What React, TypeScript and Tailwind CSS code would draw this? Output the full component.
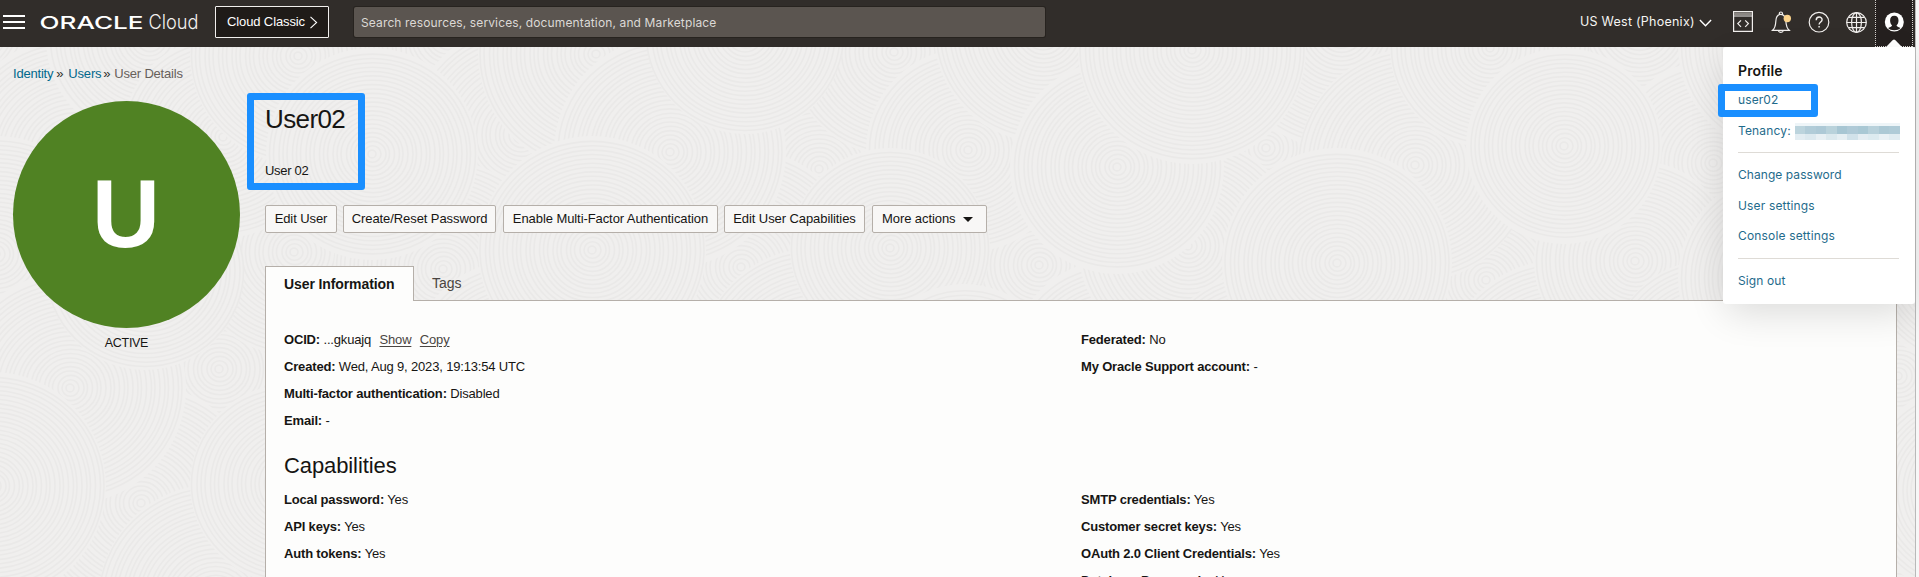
import React from "react";

const COLS = 14;
const ROWS = 6;

const SWIRLS = Array.from({ length: COLS * ROWS }, (_, n) => {
  const col = n % COLS;
  const row = Math.floor(n / COLS);
  return {
    x: col * 152 - 20 + (row % 2) * 76 + ((n * 37) % 40) - 20,
    y: row * 112 + 40 + ((n * 53) % 36) - 18,
    r: 98 + ((n * 29) % 24),
    order: (n * 31) % 83,
  };
}).sort((a, b) => a.order - b.order);

const RINGS = Array.from({ length: 27 }, (_, i) => 4 + i * 4.5);

function Backdrop() {
  return (
    <svg className="absolute inset-0 h-full w-full" aria-hidden="true">
      {SWIRLS.map(({ x, y, r }, n) => (
        <g key={n}>
          <circle cx={x} cy={y} r={r} fill="#f0efee" />
          {RINGS.filter((q) => q < r).map((q, i) => (
            <ellipse key={i} cx={x + (i % 3) * 0.5} cy={y} rx={q} ry={q * 0.97} fill="none" stroke="#eae9e8" strokeWidth="1.6" />
          ))}
        </g>
      ))}
    </svg>
  );
}

function Row({ label, children }: { label: string; children: React.ReactNode }) {
  return (
    <div className="h-[27px] leading-[27px] tracking-[-0.17px] whitespace-nowrap">
      <span className="font-bold">{label}:</span> {children}
    </div>
  );
}

const BUTTONS = [
  { text: "Edit User", cls: "w-[72px]" },
  { text: "Create/Reset Password", cls: "w-[153px] ml-[6px]" },
  { text: "Enable Multi-Factor Authentication", cls: "w-[215px] ml-[7px]" },
  { text: "Edit User Capabilities", cls: "w-[141px] ml-[6px]" },
];

function Header() {
  return (
    <header className="relative flex h-[47px] w-[1915px] items-start bg-[#312d2a] text-white">
      <div className="mt-[15px] ml-[3px] flex w-[22px] flex-col gap-[4px]">
        <i className="h-[2px] bg-white" />
        <i className="h-[2px] bg-white" />
        <i className="h-[2px] bg-white" />
      </div>
      <svg className="ml-[14px] h-[47px] w-[162px]" viewBox="39 0 162 47">
        <text x="39.5" y="28.8" textLength="104" lengthAdjust="spacingAndGlyphs" className="fill-white font-['Inter'] text-[17.5px] font-medium">ORACLE</text>
        <text x="148.5" y="29" textLength="50" lengthAdjust="spacingAndGlyphs" className="fill-[#f4f2f0] font-['Inter'] text-[19.5px] font-light">Cloud</text>
      </svg>
      <button className="mt-[6px] ml-[14px] flex h-[32px] w-[114px] items-center rounded-[1px] border border-[#f1efed] bg-[#1f1b18] pb-px pl-[11px] text-[13px] tracking-[-0.12px]">
        Cloud Classic
        <svg className="mt-[2px] ml-[4px] h-[13px] w-[9px]" viewBox="0 0 9 13" fill="none" stroke="#fff" strokeWidth="1.1">
          <path d="M1.5 .8 7.6 6.5 1.5 12.2" />
        </svg>
      </button>
      <div className="mt-[7px] ml-[25px] flex h-[30px] w-[691px] items-center rounded-[2px] bg-[#5b5550] pt-px pl-[7px] font-['Inter'] text-[12px] tracking-[0.13px] text-[#dcd9d6] shadow-[0_0_0_1px_#27231f]">
        <span className="whitespace-nowrap">Search resources, services, documentation, and Marketplace</span>
      </div>
      <div className="ml-[535px] flex h-[45px] w-[134px] items-center whitespace-nowrap font-['Inter'] text-[12.5px] tracking-[0.25px] text-[#f5f4f2]">
        US West (Phoenix)
        <svg className="ml-[4px] h-[8px] w-[13px] shrink-0" viewBox="0 0 12 8" fill="none" stroke="#fff" strokeWidth="1.4">
          <path d="M.4 1 6 6.800 11.600 1" />
        </svg>
      </div>
      <svg className="ml-auto h-[47px] w-[182px] shrink-0" viewBox="1733 0 182 47" fill="none" stroke="#f1efed" strokeWidth="1.2">
        <path d="M1733.6 11.6h18.8v19.8h-18.8zM1733.6 16h18.8" />
        <path d="M1734 13.8h18" stroke="#8b8783" strokeWidth="2.6" />
        <path d="m1741 20.4-3.2 3.2 3.2 3.2M1745.2 20.4l3.2 3.2-3.2 3.2" />
        <path d="M1772.6 30.3c2.6-2.3 3-4.8 3.2-8.8.2-4.600 1.900-7.100 5-7.100s4.900 2.500 5.100 7.100c.2 4 .7 6.500 3.300 8.800zM1779.300 14.500v-.9a1.600 1.600 0 0 1 3.200 0v.9M1778.300 30.500c.5 2.400 4.600 2.400 5.100 0" />
        <circle cx="1787.300" cy="18.500" r="3.700" fill="#fbd38b" stroke="none" />
        <circle cx="1819" cy="22.200" r="9.800" />
        <path d="M1816.200 20.200c0-4.200 5.900-4 5.900-.5 0 2.300-3 2.300-3 4.900M1819.100 26v1.500" strokeWidth="1.400" />
        <circle cx="1856.500" cy="22.500" r="9.800" />
        <ellipse cx="1856.500" cy="22.500" rx="4.900" ry="9.800" />
        <path d="M1856.500 12.700v19.600M1846.700 22.500h19.600M1848.700 17.300h15.600M1848.700 27.700h15.600" />
        <path d="M1875 0h38v47h-38z" fill="#25201f" stroke="none" />
        <path d="M1875.500 0v47M1912.500 0v47M1875 46.500h38" stroke="#d5d2ce" strokeWidth="1" strokeDasharray="1 1" />
        <circle cx="1894.300" cy="22" r="9.500" fill="#fff" stroke="none" />
        <path d="M1894.300 15.700c-2.800 0-4.200 1.900-4.200 4.700 0 2.100.8 4 2 5-.3 1.300-2.700 1.700-4 2.600 2.500 3 9.900 3 12.400 0-1.300-.9-3.700-1.300-4-2.600 1.200-1 2-2.900 2-5 0-2.800-1.400-4.700-4.200-4.700z" fill="#25201f" stroke="none" />
        <path d="m1886 47 6.800-7q1.200-1 2.400 0l6.800 7z" fill="#fff" stroke="none" />
      </svg>
    </header>
  );
}

const MOSAIC_TOP = ["#b9d2dc", "#adcad6", "#a9c7d4", "#b6d0da", "#a3c3d1", "#abc8d5", "#a5c6d2", "#b5cfda", "#a8c7d3", "#abc9d5"];
const MOSAIC_BOTTOM = ["#e2edf2", "#dbe8ef", "#e7f0f4", "#dbe8ee", "#e5eff3", "#cfe1e9", "#e3edf2", "#dceaf0", "#e8f1f5", "#dfebf1"];

function ProfileMenu() {
  return (
    <aside className="absolute top-[47px] left-[1723px] z-10 h-[257px] w-[192px] rounded-[3px] bg-white pl-[15px] font-['Inter'] text-[12px] text-[#1f6b8c] shadow-[0_12px_36px_-4px_rgba(0,0,0,0.14)]">
      <div className="mt-[11px] h-[26px] text-[14px] leading-[26px] font-semibold tracking-[0.1px] text-[#161513]">Profile</div>
      <div className="mt-[2px] h-[28px] leading-[28px] tracking-[0.1px]">user02</div>
      <div className="mt-[2px] flex h-[30px] items-center tracking-[0.15px]">
        Tenancy:
        <div className="ml-[4px] w-[105px] opacity-95">
          <div className="h-[3px] bg-[#eef5f8]" />
          <div className="flex h-[8px]">
            {MOSAIC_TOP.map((c, i) => <i key={i} className="flex-1" style={{ background: c }} />)}
          </div>
          <div className="flex h-[6px]">
            {MOSAIC_BOTTOM.map((c, i) => <i key={i} className="flex-1" style={{ background: c }} />)}
          </div>
        </div>
      </div>
      <div className="mt-[6px] h-px w-[161px] bg-[#dedbd6]" />
      <div className="mt-[7px] h-[30px] leading-[30px] tracking-[0.06px]">Change password</div>
      <div className="h-[31px] leading-[31px] tracking-[0.16px]">User settings</div>
      <div className="h-[30px] leading-[30px] tracking-[0.16px]">Console settings</div>
      <div className="mt-[7px] h-px w-[161px] bg-[#dedbd6]" />
      <div className="mt-[7px] h-[30px] leading-[30px] tracking-[0.1px]">Sign out</div>
      <div className="absolute top-[37px] -left-[5px] h-[33px] w-[100px] rounded-[3px] border-[7px] border-[#1a8fff]" />
    </aside>
  );
}

export default function App() {
  return (
    <div className="relative h-[577px] w-[1919px] overflow-hidden bg-[#f0efee] font-['Liberation_Sans',sans-serif] text-[13px] text-[#161513]">
      <Backdrop />
      <Header />
      <div className="relative">
        <nav className="flex h-[54px] items-center pl-[13px] text-[13px] tracking-[-0.2px] text-[#00688c]">
          <span>Identity</span>
          <span className="ml-[3px] text-[#312d2a]">»</span>
          <span className="ml-[5px]">Users</span>
          <span className="ml-[2px] text-[#312d2a]">»</span>
          <span className="ml-[4px] text-[#67605b]">User Details</span>
        </nav>
        <div className="flex">
          <div className="ml-[13px] w-[227px] shrink-0 text-center">
            <div className="flex h-[227px] items-center justify-center rounded-full bg-[#508223] pb-[2px] text-[97px] font-bold text-white"><span className="scale-x-[0.97]">U</span></div>
            <div className="h-[30px] text-[12.500px] leading-[30px] tracking-[-0.3px]">ACTIVE</div>
          </div>
          <main className="relative ml-[25px] w-[1632px]">
            <h1 className="h-[36px] text-[26px] leading-[36px] tracking-[-0.6px]">User02</h1>
            <p className="mt-[24px] h-[20px] text-[13px] leading-[20px] tracking-[-0.3px]">User 02</p>
            <div className="absolute -top-[8px] -left-[18px] h-[97px] w-[118px] rounded-[3px] border-[7px] border-[#1a8fff]" />
            <div className="mt-[24px] flex text-[13px] tracking-[-0.08px]">
              {BUTTONS.map((b) => (
                <button key={b.text} className={`flex h-[28px] items-center justify-center rounded-[2px] border border-[#b5afa9] bg-[#f8f7f6] whitespace-nowrap ${b.cls}`}>
                  {b.text}
                </button>
              ))}
              <button className="ml-[7px] flex h-[28px] w-[115px] items-center rounded-[2px] border border-[#b5afa9] bg-[#f8f7f6] pl-[9px] whitespace-nowrap">
                More actions
                <svg className="mt-[1px] ml-[8px] h-[5px] w-[10px]" viewBox="0 0 10 5"><path d="M0 0h10L5 5z" fill="#161513" /></svg>
              </button>
            </div>
            <div className="mt-[33px] flex h-[35px] text-[14px]">
              <div className="relative z-1 h-[35px] w-[149px] border border-b-0 border-[#b5afa9] bg-[#fdfdfc] pl-[18px] leading-[34px] font-bold whitespace-nowrap tracking-[-0.1px]">User Information</div>
              <div className="pl-[18px] leading-[34px] text-[#4a4541]">Tags</div>
            </div>
            <section className="-mt-px h-[290px] border border-[#b5afa9] bg-[#fdfdfc] pt-[25px] pl-[18px]">
              <div className="grid grid-cols-[797px_1fr]">
                <div>
                  <Row label="OCID">
                    ...gkuajq <span className="ml-[5px] text-[#4a4541] underline underline-offset-2">Show</span> <span className="ml-[5px] text-[#4a4541] underline underline-offset-2">Copy</span>
                  </Row>
                  <Row label="Created">Wed, Aug 9, 2023, 19:13:54 UTC</Row>
                  <Row label="Multi-factor authentication">Disabled</Row>
                  <Row label="Email">-</Row>
                </div>
                <div>
                  <Row label="Federated">No</Row>
                  <Row label="My Oracle Support account">-</Row>
                </div>
              </div>
              <h2 className="mt-[17px] h-[30px] text-[22px] leading-[30px] tracking-[-0.1px]">Capabilities</h2>
              <div className="mt-[5px] grid grid-cols-[797px_1fr]">
                <div>
                  <Row label="Local password">Yes</Row>
                  <Row label="API keys">Yes</Row>
                  <Row label="Auth tokens">Yes</Row>
                </div>
                <div>
                  <Row label="SMTP credentials">Yes</Row>
                  <Row label="Customer secret keys">Yes</Row>
                  <Row label="OAuth 2.0 Client Credentials">Yes</Row>
                  <Row label="Database Passwords">Yes</Row>
                </div>
              </div>
            </section>
          </main>
        </div>
      </div>
      <ProfileMenu />
      <div className="absolute top-0 right-0 h-full w-[4px] border-l border-[#b9b9b9] bg-[#f7f7f7]" />
    </div>
  );
}
